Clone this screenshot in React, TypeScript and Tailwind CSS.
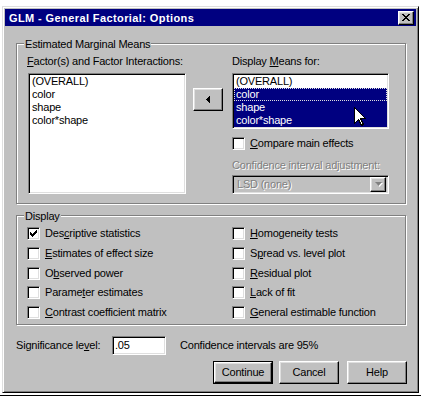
import React from "react";

const raised =
  "border border-t-white border-l-white border-r-black border-b-black shadow-[inset_-1px_-1px_0_#808080,inset_1px_1px_0_#dfdfdf]";
const sunken =
  "border border-t-[#808080] border-l-[#808080] border-r-white border-b-white shadow-[inset_1px_1px_0_#000,inset_-1px_-1px_0_#dfdfdf]";
const etched = "border border-[#808080] shadow-[inset_1px_1px_0_#fff,1px_1px_0_#fff]";
const disabled = "text-[#808080] [text-shadow:1px_1px_0_#fff]";

// underlines the mnemonic letter
function Mn({ text, at }: { text: string; at: number }) {
  if (at < 0) return <>{text}</>;
  return (
    <>
      {text.slice(0, at)}
      <span className="underline underline-offset-[1px]">{text[at]}</span>
      {text.slice(at + 1)}
    </>
  );
}

function CheckMark() {
  return (
    <svg width="7" height="7" viewBox="0 0 7 7" shapeRendering="crispEdges">
      <rect x="6" y="0" width="1" height="1" />
      <rect x="5" y="1" width="2" height="1" />
      <rect x="0" y="2" width="1" height="1" />
      <rect x="4" y="2" width="3" height="1" />
      <rect x="0" y="3" width="2" height="1" />
      <rect x="3" y="3" width="3" height="1" />
      <rect x="0" y="4" width="5" height="1" />
      <rect x="1" y="5" width="3" height="1" />
      <rect x="2" y="6" width="1" height="1" />
    </svg>
  );
}

function Check({ label, at, checked = false, className = "" }: { label: string; at: number; checked?: boolean; className?: string }) {
  return (
    <div className={`flex items-center h-[13px] gap-[5px] ${className}`}>
      <div className={`w-[13px] h-[13px] shrink-0 bg-white flex items-center justify-center ${sunken}`}>
        {checked && <CheckMark />}
      </div>
      <span className="whitespace-nowrap">
        <Mn text={label} at={at} />
      </span>
    </div>
  );
}

function Button({ label, isDefault = false }: { label: string; isDefault?: boolean }) {
  if (isDefault) {
    return (
      <div className="w-[60px] h-[23px] border border-black">
        <div className={`w-full h-full flex items-center justify-center ${raised}`}>{label}</div>
      </div>
    );
  }
  return <div className={`w-[60px] h-[23px] flex items-center justify-center ${raised}`}>{label}</div>;
}

const leftChecks = [
  { label: "Descriptive statistics", at: 3, checked: true, mt: "mt-[4px]" },
  { label: "Estimates of effect size", at: 0, mt: "mt-[7px]" },
  { label: "Observed power", at: 1, mt: "mt-[7px]" },
  { label: "Parameter estimates", at: 6, mt: "mt-[6px]" },
  { label: "Contrast coefficient matrix", at: 0, mt: "mt-[7px]" },
];

const rightChecks = [
  { label: "Homogeneity tests", at: 0, mt: "mt-[4px]" },
  { label: "Spread vs. level plot", at: 1, mt: "mt-[7px]" },
  { label: "Residual plot", at: 0, mt: "mt-[7px]" },
  { label: "Lack of fit", at: 0, mt: "mt-[6px]" },
  { label: "General estimable function", at: 0, mt: "mt-[7px]" },
];

export default function App() {
  return (
    <div className="relative w-[421px] h-[397px] overflow-hidden bg-white font-['Liberation_Sans',Arial,sans-serif] text-[11px] leading-[13px] tracking-[-0.2px] text-black">
      {/* dialog window */}
      <div className="ml-[2px] mt-[6px] w-[417px] h-[387px] bg-[#c0c0c0] p-[2px] border border-t-[#dfdfdf] border-l-[#dfdfdf] border-r-black border-b-black shadow-[inset_1px_1px_0_#fff,inset_-1px_-1px_0_#808080]">
        {/* title bar */}
        <div className="h-[17px] bg-[#000080] flex items-center justify-between pl-[4px] pr-[2px]">
          <span className="text-white font-bold tracking-[0.4px] leading-[13px] mt-[1px]">
            GLM - General Factorial: Options
          </span>
          <div className={`w-[16px] h-[14px] bg-[#c0c0c0] flex items-center justify-center ${raised}`}>
            <svg width="8" height="7" viewBox="0 0 8 7" shapeRendering="crispEdges">
              <rect x="0" y="0" width="2" height="1" />
              <rect x="6" y="0" width="2" height="1" />
              <rect x="1" y="1" width="2" height="1" />
              <rect x="5" y="1" width="2" height="1" />
              <rect x="2" y="2" width="4" height="1" />
              <rect x="3" y="3" width="2" height="1" />
              <rect x="2" y="4" width="4" height="1" />
              <rect x="1" y="5" width="2" height="1" />
              <rect x="5" y="5" width="2" height="1" />
              <rect x="0" y="6" width="2" height="1" />
              <rect x="6" y="6" width="2" height="1" />
            </svg>
          </div>
        </div>

        <div className="pl-[11px] flex flex-col">
          {/* Estimated Marginal Means */}
          <div className={`mt-[17px] w-[390px] h-[161px] flex flex-col ${etched}`}>
            <span className="-mt-[6px] ml-[7px] px-[1px] self-start bg-[#c0c0c0]">Estimated Marginal Means</span>
            <div className="flex mt-[4px] ml-[11px]">
              <div className="w-[158px] flex flex-col">
                <span className="-ml-[1px] whitespace-nowrap">
                  <Mn text="Factor(s) and Factor Interactions:" at={0} />
                </span>
                <div className={`mt-[5px] w-[158px] h-[121px] bg-white p-[1px] ${sunken}`}>
                  {["(OVERALL)", "color", "shape", "color*shape"].map((t) => (
                    <div key={t} className="h-[13px] pl-[2px]">
                      {t}
                    </div>
                  ))}
                </div>
              </div>

              <div className={`ml-[7px] mt-[33px] w-[30px] h-[23px] flex items-center justify-center ${raised}`}>
                <svg width="4" height="7" viewBox="0 0 4 7" shapeRendering="crispEdges">
                  <path d="M4 0 L4 7 L0 3.5 Z" fill="#000" />
                </svg>
              </div>

              <div className="ml-[9px] w-[157px] flex flex-col">
                <span className="whitespace-nowrap">
                  <Mn text="Display Means for:" at={8} />
                </span>
                <div className={`mt-[5px] w-[157px] h-[56px] bg-white p-[1px] ${sunken}`}>
                  <div className="h-[13px] pl-[2px]">(OVERALL)</div>
                  <div className="h-[13px] pl-[2px] bg-[#000080] text-white outline outline-1 outline-dotted outline-[#e0e0e0] -outline-offset-1">
                    color
                  </div>
                  <div className="h-[13px] pl-[2px] bg-[#000080] text-white">shape</div>
                  <div className="h-[13px] pl-[2px] bg-[#000080] text-white">color*shape</div>
                </div>
                <Check className="mt-[8px]" label="Compare main effects" at={0} />
                <span className={`mt-[9px] whitespace-nowrap ${disabled}`}>Confidence interval adjustment:</span>
                <div className={`mt-[3px] w-[157px] h-[19px] flex items-center justify-between pl-[4px] pr-[2px] ${sunken}`}>
                  <span className={disabled}>LSD (none)</span>
                  <div className={`w-[16px] h-[15px] flex items-center justify-center ${raised}`}>
                    <svg width="7" height="5" viewBox="0 0 7 5" className="overflow-visible">
                      <path d="M1 1 L8 1 L4.5 5 Z" fill="#fff" />
                      <path d="M0 0 L7 0 L3.5 4 Z" fill="#808080" />
                    </svg>
                  </div>
                </div>
              </div>
            </div>
          </div>

          {/* Display */}
          <div className={`mt-[11px] w-[390px] h-[110px] flex flex-col ${etched}`}>
            <span className="-mt-[6px] ml-[7px] px-[1px] self-start bg-[#c0c0c0]">Display</span>
            <div className="flex ml-[10px]">
              <div className="w-[205px] flex flex-col">
                {leftChecks.map((c) => (
                  <Check key={c.label} className={c.mt} label={c.label} at={c.at} checked={c.checked} />
                ))}
              </div>
              <div className="flex flex-col">
                {rightChecks.map((c) => (
                  <Check key={c.label} className={c.mt} label={c.label} at={c.at} />
                ))}
              </div>
            </div>
          </div>

          {/* significance */}
          <div className="mt-[11px] h-[19px] flex items-center">
            <span className="w-[96px] whitespace-nowrap">
              <Mn text="Significance level:" at={15} />
            </span>
            <div className={`w-[54px] h-[19px] bg-white flex items-center pl-[2px] ${sunken}`}>.05</div>
            <span className="ml-[14px] whitespace-nowrap">Confidence intervals are 95%</span>
          </div>

          {/* buttons */}
          <div className="mt-[6px] w-[391px] flex justify-end">
            <Button label="Continue" isDefault />
            <div className="ml-[6px]">
              <Button label="Cancel" />
            </div>
            <div className="ml-[8px]">
              <Button label="Help" />
            </div>
          </div>
        </div>
      </div>
      <div className="mt-[2px] h-[1px] bg-black" />

      {/* mouse pointer */}
      <svg className="absolute left-[354px] top-[107px]" width="12" height="19" viewBox="0 0 12 19" shapeRendering="crispEdges">
        <path d="M0.5 0.5 L0.5 16.5 L4.5 12.5 L7.5 18.5 L9.5 17.5 L6.5 11.5 L11.5 11.5 Z" fill="#fff" stroke="#000" strokeWidth="1" />
      </svg>
    </div>
  );
}
